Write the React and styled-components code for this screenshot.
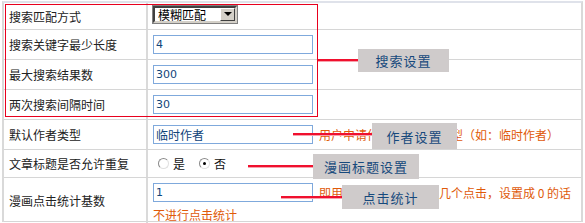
import React from 'react';
import styled, { createGlobalStyle } from 'styled-components';

const GlobalStyle = createGlobalStyle`
  html, body {
    margin: 0;
    padding: 0;
    background: #ffffff;
  }
  body {
    font-family: "Noto Sans CJK SC", "Liberation Sans", sans-serif;
    font-size: 12px;
    color: #222;
  }
`;

const Page = styled.div`
  position: relative;
  width: 585px;
  height: 223px;
  overflow: hidden;
  padding: 1px 0 0 2px;
  box-sizing: border-box;
`;

const Table = styled.div`
  width: 581px;
  border-top: 2px solid #dfe2ea;
  border-left: 2px solid #d9d9d9;
  border-right: 2px solid #d9d9d9;
  box-sizing: border-box;
`;

const Row = styled.div`
  display: grid;
  grid-template-columns: 144px 1fr;
  height: ${(p) => p.$h}px;
  border-bottom: 1px solid #d6d6d6;
  box-sizing: border-box;
`;

const Label = styled.div`
  display: flex;
  align-items: center;
  padding-left: 5px;
  border-right: 2px solid #dadada;
  white-space: nowrap;
  font-size: 12px;
  color: #222;
`;

const Value = styled.div`
  display: flex;
  flex-direction: ${(p) => (p.$stack ? 'column' : 'row')};
  align-items: ${(p) => (p.$stack ? 'flex-start' : 'center')};
  justify-content: ${(p) => (p.$stack ? 'flex-start' : 'flex-start')};
  padding: ${(p) => (p.$stack ? '5px 0 0 5px' : '0 0 0 5px')};
  gap: 4px;
`;

const TextInput = styled.div`
  width: 160px;
  height: 19px;
  border: 1px solid #7fa9dc;
  box-sizing: border-box;
  padding: 0 2px;
  display: flex;
  align-items: center;
  font-family: ${(p) => (p.$cjk ? '"Noto Sans CJK SC", sans-serif' : '"DejaVu Sans", sans-serif')};
  font-size: ${(p) => (p.$cjk ? 12 : 11)}px;
  color: #11457a;
  margin-top: ${(p) => p.$mt || 0}px;
`;

const Select = styled.div`
  width: 84px;
  height: 17px;
  margin-top: -4px;
  box-sizing: border-box;
  border: 2px solid;
  border-color: #404040 #d4d0c8 #d4d0c8 #404040;
  outline: 1px solid #808080;
  display: flex;
  align-items: stretch;
  background: #fff;
`;

const SelectText = styled.span`
  flex: 1;
  padding-left: 3px;
  line-height: 13px;
  font-size: 12px;
  color: #000;
`;

const SelectButton = styled.span`
  width: 15px;
  background: #d4d0c8;
  border: 1px solid;
  border-color: #fff #404040 #404040 #fff;
  box-sizing: border-box;
  display: flex;
  align-items: center;
  justify-content: center;
  &::after {
    content: '';
    border-left: 4px solid transparent;
    border-right: 4px solid transparent;
    border-top: 4px solid #000;
  }
`;

const RadioGroup = styled.div`
  display: flex;
  align-items: center;
  padding-left: 5px;
  gap: 4px;
`;

const Radio = styled.span`
  width: 11px;
  height: 11px;
  border-radius: 50%;
  box-sizing: border-box;
  border: 1px solid #8a8a8a;
  border-right-color: #e0e0e0;
  border-bottom-color: #e0e0e0;
  background: #fff;
  display: inline-flex;
  align-items: center;
  justify-content: center;
  &::after {
    content: '';
    width: 3px;
    height: 3px;
    border-radius: 50%;
    background: ${(p) => (p.$checked ? '#000' : 'transparent')};
  }
`;

const RadioText = styled.span`
  margin-right: 10px;
  font-size: 12px;
  color: #111;
`;

const Hint = styled.span`
  color: #e05a0a;
  font-size: 12px;
  white-space: nowrap;
  margin-left: ${(p) => p.$ml || 0}px;
`;

const NoteRow = styled.div`
  display: flex;
  align-items: center;
`;

/* annotations drawn on top of the form */
const RedBox = styled.div`
  position: absolute;
  left: 5px;
  top: 4px;
  width: 313px;
  height: 113px;
  border: 1px solid #e8001e;
  box-sizing: border-box;
`;

const RedLine = styled.div`
  position: absolute;
  left: ${(p) => p.$x}px;
  top: ${(p) => p.$y}px;
  width: ${(p) => p.$w}px;
  height: 2px;
  background: #f0102e;
  box-shadow: 0 1px 0 #f7a2ad;
`;

const Tag = styled.div`
  position: absolute;
  left: ${(p) => p.$x}px;
  top: ${(p) => p.$y}px;
  width: ${(p) => p.$w}px;
  height: ${(p) => p.$h}px;
  background: #cfcbcb;
  color: #16497c;
  font-size: 13px;
  letter-spacing: 1px;
  display: flex;
  align-items: center;
  justify-content: center;
`;

export default function App() {
  return (
    <>
      <GlobalStyle />
      <Page>
        <Table>
          <Row $h={27}>
            <Label>搜索匹配方式</Label>
            <Value>
              <Select>
                <SelectText>模糊匹配</SelectText>
                <SelectButton />
              </Select>
            </Value>
          </Row>
          <Row $h={30}>
            <Label>搜索关键字最少长度</Label>
            <Value>
              <TextInput>4</TextInput>
            </Value>
          </Row>
          <Row $h={30}>
            <Label>最大搜索结果数</Label>
            <Value>
              <TextInput>300</TextInput>
            </Value>
          </Row>
          <Row $h={30}>
            <Label>两次搜索间隔时间</Label>
            <Value>
              <TextInput>30</TextInput>
            </Value>
          </Row>
          <Row $h={30}>
            <Label>默认作者类型</Label>
            <Value>
              <TextInput $cjk>临时作者</TextInput>
              <Hint $ml={2}>用户申请作者时的默认类型（如：临时作者）</Hint>
            </Value>
          </Row>
          <Row $h={28}>
            <Label>文章标题是否允许重复</Label>
            <Value>
              <RadioGroup>
                <Radio />
                <RadioText>是</RadioText>
                <Radio $checked />
                <RadioText>否</RadioText>
              </RadioGroup>
            </Value>
          </Row>
          <Row $h={44}>
            <Label>漫画点击统计基数</Label>
            <Value $stack>
              <NoteRow>
                <TextInput>1</TextInput>
                <Hint $ml={6}>即用户点击一次计算为几个点击，设置成 0 的话</Hint>
              </NoteRow>
              <Hint>不进行点击统计</Hint>
            </Value>
          </Row>
        </Table>

        <RedBox />
        <RedLine $x={318} $y={59} $w={40} />
        <Tag $x={358} $y={49} $w={91} $h={23}>搜索设置</Tag>

        <RedLine $x={293} $y={133} $w={79} />
        <Tag $x={372} $y={123} $w={85} $h={26}>作者设置</Tag>

        <RedLine $x={248} $y={165} $w={65} />
        <Tag $x={313} $y={154} $w={106} $h={25}>漫画标题设置</Tag>

        <RedLine $x={281} $y={196} $w={61} />
        <Tag $x={342} $y={185} $w={97} $h={24}>点击统计</Tag>
      </Page>
    </>
  );
}
